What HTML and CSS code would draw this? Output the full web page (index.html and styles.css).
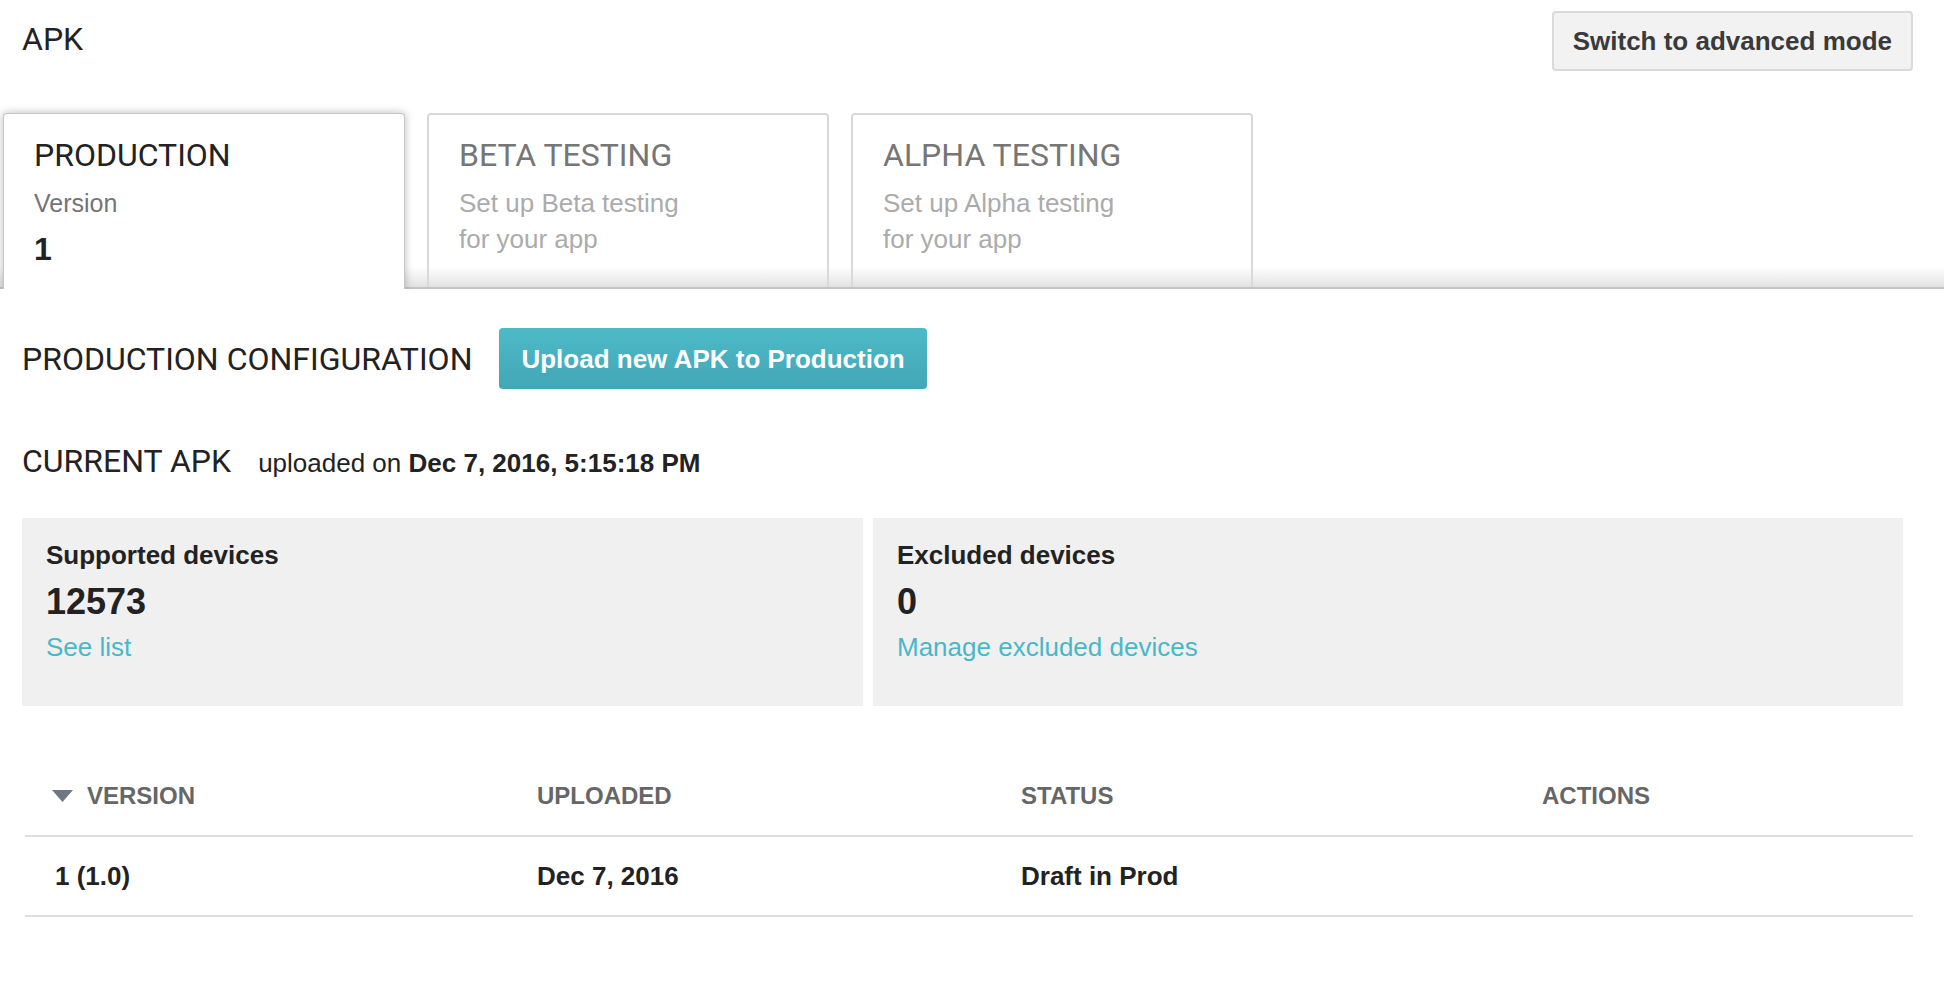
FILE: index.html
```html
<!DOCTYPE html>
<html lang="en">
<head>
<meta charset="utf-8">
<title>APK</title>
<link rel="stylesheet" href="styles.css">
</head>
<body>
  <header class="topbar">
    <h1 class="page-title">APK</h1>
    <button class="btn-mode">Switch to advanced mode</button>
  </header>

  <nav class="tabs">
    <div class="tab tab-active">
      <div class="tab-title">PRODUCTION</div>
      <div class="tab-label">Version</div>
      <div class="tab-value">1</div>
    </div>
    <div class="tab">
      <div class="tab-title">BETA TESTING</div>
      <div class="tab-sub">Set up Beta testing<br>for your app</div>
    </div>
    <div class="tab">
      <div class="tab-title">ALPHA TESTING</div>
      <div class="tab-sub">Set up Alpha testing<br>for your app</div>
    </div>
  </nav>

  <section class="config">
    <h2 class="section-title">PRODUCTION CONFIGURATION</h2>
    <button class="btn-upload">Upload new APK to Production</button>
  </section>

  <section class="current">
    <h2 class="section-title">CURRENT APK</h2>
    <span class="uploaded">uploaded on <b>Dec 7, 2016, 5:15:18 PM</b></span>
  </section>

  <section class="cards">
    <div class="card">
      <div class="card-label">Supported devices</div>
      <div class="card-num">12573</div>
      <a class="card-link" href="#">See list</a>
    </div>
    <div class="card">
      <div class="card-label">Excluded devices</div>
      <div class="card-num">0</div>
      <a class="card-link" href="#">Manage excluded devices</a>
    </div>
  </section>

  <section class="table">
    <div class="thead">
      <div class="th th-sort">
        <svg class="sort-icon" width="21" height="12" viewBox="0 0 21 12"><polygon points="0,0 21,0 10.5,12" fill="#6f7783"/></svg>
        <span>VERSION</span>
      </div>
      <div class="th">UPLOADED</div>
      <div class="th">STATUS</div>
      <div class="th">ACTIONS</div>
    </div>
    <div class="trow">
      <div class="td">1 (1.0)</div>
      <div class="td">Dec 7, 2016</div>
      <div class="td">Draft in Prod</div>
      <div class="td"></div>
    </div>
  </section>
</body>
</html>
```

FILE: styles.css
```css
html, body {
  margin: 0;
  padding: 0;
  background: #ffffff;
}

body {
  font-family: "Liberation Sans", Arial, sans-serif;
  color: #222222;
}

.topbar {
  display: flex;
  justify-content: space-between;
  align-items: flex-start;
  padding: 11px 31px 0 22px;
}

.page-title {
  margin: 12px 0 0;
  font: 400 32px/32px Roboto, "Liberation Sans", sans-serif;
  color: #222222;
}

.btn-mode {
  box-sizing: border-box;
  height: 60px;
  padding: 0 19px;
  border: 2px solid #dadada;
  border-radius: 4px;
  background: #f2f2f2;
  color: #3a3a3a;
  font: 700 26px/56px "Liberation Sans", Arial, sans-serif;
}

.tabs {
  display: flex;
  align-items: flex-start;
  gap: 22px;
  margin-top: 42px;
  padding-left: 3px;
  border-bottom: 2px solid #c4c4c4;
  background: linear-gradient(to bottom, #ffffff calc(100% - 20px), #e2e2e2 100%);
}

.tab {
  box-sizing: border-box;
  width: 402px;
  height: 174px;
  padding: 20px 30px 0;
  border: 2px solid #d9d9d9;
  border-bottom: 0;
  border-radius: 4px 4px 0 0;
  background: linear-gradient(to bottom, #ffffff calc(100% - 20px), #e2e2e2 100%);
}

.tab-active {
  position: relative;
  z-index: 1;
  height: 176px;
  margin-bottom: -2px;
  padding: 21px 30px 0;
  border: 1px solid #c6c6c6;
  border-bottom: 0;
  background: #ffffff;
  box-shadow: 0 0 9px rgba(0, 0, 0, 0.28);
  clip-path: inset(-14px -14px 0 -14px);
}

.tab-title {
  margin: 0 0 10px;
  font: 400 32px/40px Roboto, "Liberation Sans", sans-serif;
  color: #767676;
}

.tab-active .tab-title {
  color: #222222;
}

.tab-label {
  font-size: 25px;
  line-height: 36px;
  color: #747474;
}

.tab-value {
  margin-top: 8px;
  font-size: 32px;
  line-height: 40px;
  font-weight: 700;
  color: #222222;
}

.tab-sub {
  font-size: 26px;
  line-height: 36px;
  color: #ababab;
}

.config {
  display: flex;
  align-items: center;
  gap: 27px;
  margin-top: 39px;
  padding-left: 22px;
}

.section-title {
  margin: 0;
  font: 400 32px/40px Roboto, "Liberation Sans", sans-serif;
  color: #222222;
}

.btn-upload {
  height: 61px;
  padding: 0 22px;
  border: 0;
  border-radius: 4px;
  background: linear-gradient(to bottom, #4dbac8, #42a6b7);
  color: #ffffff;
  font: 700 26px/62px "Liberation Sans", Arial, sans-serif;
}

.current {
  display: flex;
  align-items: baseline;
  gap: 27px;
  margin-top: 52px;
  padding-left: 22px;
}

.uploaded {
  font-size: 26px;
  line-height: 36px;
  color: #222222;
}

.uploaded b {
  font-weight: 700;
}

.cards {
  display: grid;
  grid-template-columns: 841px 1030px;
  gap: 10px;
  margin: 37px 0 0 22px;
}

.card {
  box-sizing: border-box;
  height: 188px;
  padding: 19px 24px 0;
  background: #f0f0f0;
}

.card-label {
  font-size: 26px;
  line-height: 36px;
  font-weight: 700;
  color: #222222;
}

.card-num {
  margin-top: 5px;
  font-size: 36px;
  line-height: 48px;
  font-weight: 700;
  color: #222222;
}

.card-link {
  display: block;
  margin-top: 3px;
  font-size: 26px;
  line-height: 36px;
  color: #4ab7c8;
  text-decoration: none;
}

.table {
  width: 1888px;
  margin: 50px 0 0 25px;
}

.thead,
.trow {
  display: grid;
  grid-template-columns: 482px 484px 521px 1fr;
  border-bottom: 2px solid #dedede;
}

.th {
  padding: 22px 0 21px 30px;
  font-size: 24px;
  line-height: 36px;
  font-weight: 700;
  color: #666666;
}

.th-sort {
  display: flex;
  align-items: center;
  gap: 14px;
  padding-left: 27px;
}

.sort-icon {
  display: block;
  flex: none;
}

.td {
  padding: 21px 0 21px 30px;
  font-size: 26px;
  line-height: 36px;
  font-weight: 700;
  color: #222222;
}
```
